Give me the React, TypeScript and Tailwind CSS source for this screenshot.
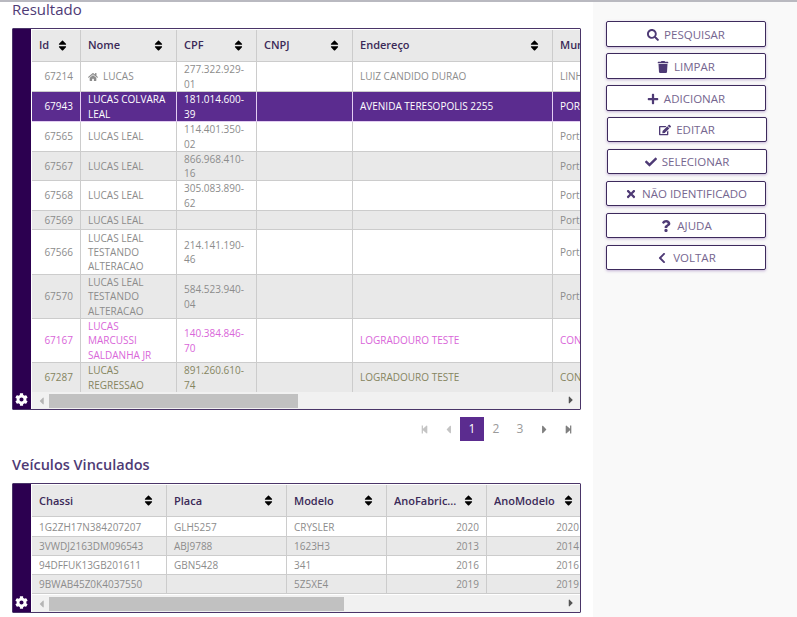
import { FaSearch, FaTrash, FaPlus, FaEdit, FaCheck, FaTimes, FaQuestion, FaChevronLeft, FaHome, FaCog, FaSort, FaCaretLeft, FaCaretRight, FaStepBackward, FaStepForward } from 'react-icons/fa'
import type { ReactNode } from 'react'

type Tone = 'normal' | 'selected' | 'pink' | 'olive'

interface PersonRow {
  h: string
  tone: Tone
  id: string
  nome: ReactNode
  cpf: string
  end: string
  mun: string
}

const people: PersonRow[] = [
  { h: 'h-[30px]', tone: 'normal', id: '67214', nome: <><FaHome className="inline mr-[5px] mb-[2px] text-[10px]" />LUCAS</>, cpf: '277.322.929-01', end: 'LUIZ CANDIDO DURAO', mun: 'LINHARES' },
  { h: 'h-[30px]', tone: 'selected', id: '67943', nome: 'LUCAS COLVARA LEAL', cpf: '181.014.600-39', end: 'AVENIDA TERESOPOLIS 2255', mun: 'PORTO ALEGRE' },
  { h: 'h-[30px]', tone: 'normal', id: '67565', nome: 'LUCAS LEAL', cpf: '114.401.350-02', end: '', mun: 'Porto Alegre' },
  { h: 'h-[29px]', tone: 'normal', id: '67567', nome: 'LUCAS LEAL', cpf: '866.968.410-16', end: '', mun: 'Porto Alegre' },
  { h: 'h-[30px]', tone: 'normal', id: '67568', nome: 'LUCAS LEAL', cpf: '305.083.890-62', end: '', mun: 'Porto Alegre' },
  { h: 'h-[19px]', tone: 'normal', id: '67569', nome: 'LUCAS LEAL', cpf: '', end: '', mun: 'Porto Alegre' },
  { h: 'h-[45px]', tone: 'normal', id: '67566', nome: 'LUCAS LEAL TESTANDO ALTERACAO', cpf: '214.141.190-46', end: '', mun: 'Porto Alegre' },
  { h: 'h-[44px]', tone: 'normal', id: '67570', nome: 'LUCAS LEAL TESTANDO ALTERACAO', cpf: '584.523.940-04', end: '', mun: 'Porto Alegre' },
  { h: 'h-[44px]', tone: 'pink', id: '67167', nome: 'LUCAS MARCUSSI SALDANHA JR', cpf: '140.384.846-70', end: 'LOGRADOURO TESTE', mun: 'CONTAGEM' },
  { h: 'h-[30px]', tone: 'olive', id: '67287', nome: 'LUCAS REGRESSAO', cpf: '891.260.610-74', end: 'LOGRADOURO TESTE', mun: 'CONTAGEM' },
]

const vehicles = [
  { h: 'h-[20px]', chassi: '1G2ZH17N384207207', placa: 'GLH5257', modelo: 'CRYSLER', fab: '2020', mod: '2020' },
  { h: 'h-[19px]', chassi: '3VWDJ2163DM096543', placa: 'ABJ9788', modelo: '1623H3', fab: '2013', mod: '2014' },
  { h: 'h-[19px]', chassi: '94DFFUK13GB201611', placa: 'GBN5428', modelo: '341', fab: '2016', mod: '2016' },
  { h: 'h-[19px]', chassi: '9BWAB45Z0K4037550', placa: '', modelo: '5Z5XE4', fab: '2019', mod: '2019' },
]

const buttons = [
  { label: 'PESQUISAR', icon: <FaSearch />, box: 'h-[26px] ml-0 pt-px' },
  { label: 'LIMPAR', icon: <FaTrash />, box: 'h-[26px] ml-0 pt-px' },
  { label: 'ADICIONAR', icon: <FaPlus />, box: 'h-[26px] ml-0 pt-px' },
  { label: 'EDITAR', icon: <FaEdit />, box: 'h-[25px] ml-px pt-px' },
  { label: 'SELECIONAR', icon: <FaCheck />, box: 'h-[25px] ml-px pt-px' },
  { label: 'NÃO IDENTIFICADO', icon: <FaTimes />, box: 'h-[25px] ml-0 pt-px' },
  { label: 'AJUDA', icon: <FaQuestion />, box: 'h-[25px] ml-0 pt-px' },
  { label: 'VOLTAR', icon: <FaChevronLeft />, box: 'h-[25px] ml-0 pt-px' },
]

const toneClass: Record<Tone, string> = {
  normal: 'text-[#8c8c8c]',
  selected: 'text-white bg-[#5b2c8f] font-medium',
  pink: 'text-[#d966d9]',
  olive: 'text-[#85855f]',
}

function HeadCell({ label, w }: { label: string; w: string }) {
  return (
    <th className={`${w} h-[32px] border-r border-b border-[#cccccc] bg-[#e9e9e9] p-0 text-left font-semibold text-[11px] text-[#3b2a58]`}>
      <div className="flex items-center justify-between pl-[7px] pr-[11px] overflow-hidden">
        <span className="truncate">{label}</span>
        <FaSort className="text-[13px] text-black shrink-0 ml-[4px]" />
      </div>
    </th>
  )
}

function GridFrame({ children, thumb, height }: { children: ReactNode; thumb: string; height: string }) {
  return (
    <div className={`flex w-[569px] ${height} border border-[#4a3568] rounded-[1px] bg-white overflow-hidden`}>
      <div className="w-[18px] shrink-0 bg-[#2c0050] flex flex-col justify-end items-center pb-[2px] pr-[1px]">
        <FaCog className="text-white text-[13px] mb-[1px]" />
      </div>
      <div className="flex-1 min-w-0 flex flex-col pl-px pt-px">
        <div className="flex-1 min-h-0 overflow-hidden">{children}</div>
        <div className="h-[17px] shrink-0 bg-[#f1f1f1] flex items-center relative">
          <FaCaretLeft className="text-[#b5b5b5] text-[12px] ml-[4px] w-[11px]" />
          <div className={`${thumb} h-[14px] bg-[#c1c1c1] ml-[2px]`} />
          <FaCaretRight className="absolute right-[3px] top-[2px] text-[#555555] text-[12px]" />
        </div>
      </div>
    </div>
  )
}

function PageBtn({ children, active, tone = 'text-[#9a9a9a]' }: { children: ReactNode; active?: boolean; tone?: string }) {
  return (
    <div className={`w-[24px] h-[24px] flex items-center justify-center text-[12px] ${active ? 'bg-[#5b2c8f] text-white' : tone}`}>
      {children}
    </div>
  )
}

export default function App() {
  return (
    <div className="w-[797px] h-[617px] overflow-hidden bg-white flex flex-col font-['Open_Sans',sans-serif]">
      <div className="h-[2px] shrink-0 bg-[#b9b9c0]" />
      <div className="flex-1 flex min-h-0">
        <div className="w-[593px] shrink-0 pl-[12px]">
          <h2 className="h-[26px] text-[15px] leading-[15px] font-medium text-[#4e3a75]">Resultado</h2>
          <GridFrame height="h-[382px]" thumb="w-[249px]">
            <table className="table-fixed border-separate border-spacing-0 w-[620px] text-[10px] leading-[14.3px]">
              <thead>
                <tr>
                  <HeadCell label="Id" w="w-[49px]" />
                  <HeadCell label="Nome" w="w-[96px]" />
                  <HeadCell label="CPF" w="w-[80px]" />
                  <HeadCell label="CNPJ" w="w-[96px]" />
                  <HeadCell label="Endereço" w="w-[200px]" />
                  <HeadCell label="Município" w="w-[99px]" />
                </tr>
              </thead>
              <tbody>
                {people.map((p, i) => {
                  const zebra = p.tone !== 'selected' && (i === 3 || i === 5 || i === 7 || i === 9) ? 'bg-[#e9e9e9]' : ''
                  const line = p.tone === 'selected' ? 'border-[#e3cdf2]' : 'border-[#cccccc]'
                  const lead = p.h === 'h-[29px]' ? 'leading-[14px]' : ''
                  const cell = `border-r border-b ${line} ${toneClass[p.tone]} ${zebra} ${lead} align-middle p-0 px-[7px] overflow-hidden`
                  return (
                    <tr key={p.id} className={p.h}>
                      <td className={`${cell} text-right`}>{p.id}</td>
                      <td className={cell}>{p.nome}</td>
                      <td className={cell}>{p.cpf}</td>
                      <td className={cell} />
                      <td className={`${cell} whitespace-nowrap`}>{p.end}</td>
                      <td className={`${cell} whitespace-nowrap`}>{p.mun}</td>
                    </tr>
                  )
                })}
              </tbody>
            </table>
          </GridFrame>
          <div className="w-[568px] mt-[7px] flex justify-end">
            <PageBtn tone="text-[#c4c4c4]"><FaStepBackward className="text-[9px]" /></PageBtn>
            <PageBtn tone="text-[#c4c4c4]"><FaCaretLeft className="text-[13px]" /></PageBtn>
            <PageBtn active>1</PageBtn>
            <PageBtn>2</PageBtn>
            <PageBtn>3</PageBtn>
            <PageBtn tone="text-[#808080]"><FaCaretRight className="text-[13px]" /></PageBtn>
            <PageBtn tone="text-[#808080]"><FaStepForward className="text-[9px]" /></PageBtn>
          </div>
          <h2 className="mt-[15px] h-[27px] text-[14.5px] leading-[18px] font-semibold text-[#4e3a75]">Veículos Vinculados</h2>
          <GridFrame height="h-[130px]" thumb="w-[295px]">
            <table className="table-fixed border-separate border-spacing-0 w-[555px] text-[10px] leading-[14px]">
              <thead>
                <tr>
                  <HeadCell label="Chassi" w="w-[135px]" />
                  <HeadCell label="Placa" w="w-[120px]" />
                  <HeadCell label="Modelo" w="w-[100px]" />
                  <HeadCell label="AnoFabric..." w="w-[100px]" />
                  <HeadCell label="AnoModelo" w="w-[100px]" />
                </tr>
              </thead>
              <tbody>
                {vehicles.map((v, i) => {
                  const cell = `border-r border-b border-[#cccccc] text-[#8c8c8c] align-middle p-0 px-[7px] whitespace-nowrap overflow-hidden ${i % 2 === 1 ? 'bg-[#e9e9e9]' : ''}`
                  return (
                    <tr key={v.chassi} className={v.h}>
                      <td className={cell}>{v.chassi}</td>
                      <td className={cell}>{v.placa}</td>
                      <td className={cell}>{v.modelo}</td>
                      <td className={`${cell} text-right`}>{v.fab}</td>
                      <td className={`${cell} text-right`}>{v.mod}</td>
                    </tr>
                  )
                })}
              </tbody>
            </table>
          </GridFrame>
        </div>
        <div className="flex-1 bg-[#f9f9f9] pt-[19px] pl-[13px]">
          {buttons.map(b => (
            <div key={b.label} className="h-[32px]">
              <button className={`${b.box} w-[160px] flex items-center justify-center gap-[5px] bg-white border border-[#3d2a5c] rounded-[2px] shadow-[0_1px_3px_rgba(91,44,143,0.35)] text-[11.5px] text-[#75668f]`}>
                <span className="text-[12px] text-[#4e3a75]">{b.icon}</span>
                {b.label}
              </button>
            </div>
          ))}
        </div>
      </div>
    </div>
  )
}
